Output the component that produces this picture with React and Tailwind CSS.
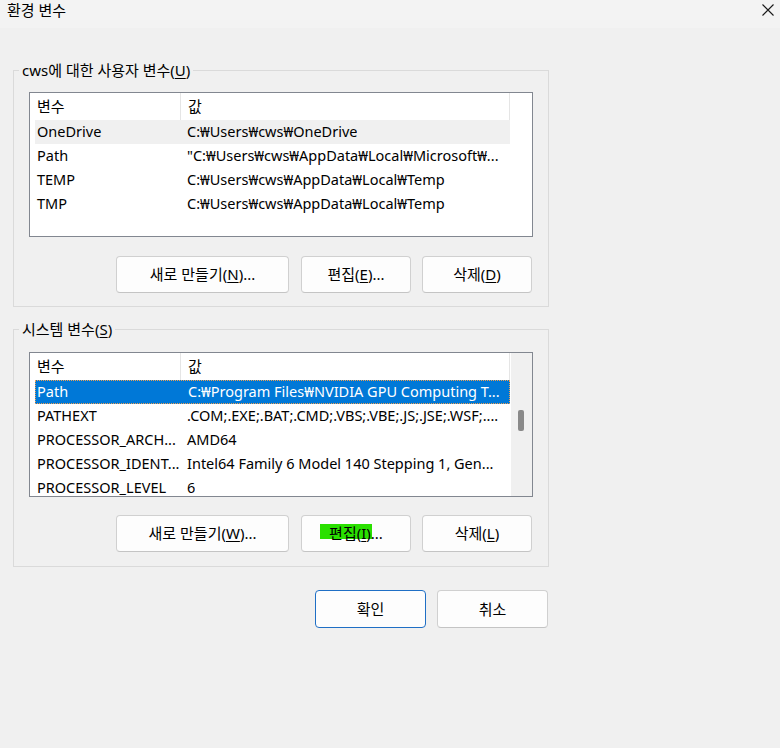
import React from 'react';

const FONT = { fontFamily: "'Segoe UI', 'Noto Sans', 'Noto Sans CJK KR', sans-serif" };

const userRows = [
  ['OneDrive', 'C:₩Users₩cws₩OneDrive'],
  ['Path', '"C:₩Users₩cws₩AppData₩Local₩Microsoft₩...'],
  ['TEMP', 'C:₩Users₩cws₩AppData₩Local₩Temp'],
  ['TMP', 'C:₩Users₩cws₩AppData₩Local₩Temp'],
];

const systemRows = [
  ['Path', 'C:₩Program Files₩NVIDIA GPU Computing T...'],
  ['PATHEXT', '.COM;.EXE;.BAT;.CMD;.VBS;.VBE;.JS;.JSE;.WSF;....'],
  ['PROCESSOR_ARCH...', 'AMD64'],
  ['PROCESSOR_IDENT...', 'Intel64 Family 6 Model 140 Stepping 1, Gen...'],
  ['PROCESSOR_LEVEL', '6'],
];

function Key({ children }) {
  return <span className="underline underline-offset-2">{children}</span>;
}

function Button({ children, className = '', focused = false }) {
  return (
    <button
      type="button"
      className={`relative flex h-[37px] items-center justify-center rounded-[4px] border bg-[#fdfdfd] text-[15px] leading-none text-black ${
        focused ? 'border-[#1f6fc5]' : 'border-[#d0d0d0] border-b-[#c4c4c4]'
      } ${className}`}
    >
      {children}
    </button>
  );
}

function VarList({ rows, hoverIndex = -1, selectedIndex = -1, scrollbar = false }) {
  return (
    <div className="flex h-[145px] w-[504px] overflow-hidden border border-[#828790] bg-white text-[14.5px]">
      <div className="w-[480px] shrink-0">
        {/* header */}
        <div className="flex h-[27px] items-center text-[15px]">
          <div className="flex h-full w-[151px] items-center border-r border-[#e5e5e5] pl-[7px]">변수</div>
          <div className="flex h-full w-[329px] items-center border-r border-[#e5e5e5] pl-[7px]">값</div>
        </div>

        {rows.map(([name, value], i) => {
          const selected = i === selectedIndex;
          const hover = i === hoverIndex;
          return (
            <div
              key={name}
              className={`ml-[5px] flex h-[24px] w-[475px] items-center whitespace-nowrap ${
                selected
                  ? 'border border-dotted border-[#f0a050] bg-[#0078d7] text-white'
                  : hover
                  ? 'bg-[#f0f0f0]'
                  : ''
              }`}
            >
              <div className={`w-[145px] shrink-0 overflow-hidden ${selected ? 'pl-[1px]' : 'pl-[2px]'}`}>{name}</div>
              <div className="overflow-hidden pl-[7px]">{value}</div>
            </div>
          );
        })}
      </div>

      {scrollbar && (
        <div className="ml-[1px] flex w-[21px] flex-col bg-[#f0f0f0] pl-[7px] pt-[57px]">
          <div className="h-[21px] w-[6px] rounded-[2px] bg-[#898989]" />
        </div>
      )}
    </div>
  );
}

function Group({ label, className = '', children }) {
  return (
    <div className={`relative w-[536px] border border-[#dadada] pl-[15px] ${className}`}>
      <span className="absolute -top-[11px] left-[5px] bg-[#f0f0f0] px-[3px] leading-[20px]">{label}</span>
      {children}
    </div>
  );
}

export default function App() {
  return (
    <div className="h-[748px] w-[780px] overflow-hidden bg-[#f0f0f0] text-[15px] text-black" style={FONT}>
      {/* title bar */}
      <div className="flex h-[28px] justify-between bg-[#f3f3f3]">
        <div className="pl-[7px] leading-[20px]">환경 변수</div>
        <div className="pr-[6px] pt-[4px]">
          <svg width="12" height="12" viewBox="0 0 12 12">
            <path d="M0.5 0.5 L11.5 11.5 M11.5 0.5 L0.5 11.5" stroke="#1a1a1a" strokeWidth="1.1" />
          </svg>
        </div>
      </div>

      <div className="pl-[13px]">
        {/* user variables */}
        <Group
          className="mt-[42px] h-[237px] pt-[21px]"
          label={
            <>
              cws에 대한 사용자 변수(<Key>U</Key>)
            </>
          }
        >
          <VarList rows={userRows} hoverIndex={0} />
          <div className="ml-[87px] mt-[19px] flex gap-[12px]">
            <Button className="w-[173px]">
              새로 만들기(<Key>N</Key>)...
            </Button>
            <Button className="w-[110px]">
              편집(<Key>E</Key>)...
            </Button>
            <Button className="-ml-[1px] w-[110px]">
              삭제(<Key>D</Key>)
            </Button>
          </div>
        </Group>

        {/* system variables */}
        <Group
          className="mt-[22px] h-[238px] pt-[22px]"
          label={
            <>
              시스템 변수(<Key>S</Key>)
            </>
          }
        >
          <VarList rows={systemRows} selectedIndex={0} scrollbar />
          <div className="ml-[87px] mt-[18px] flex gap-[12px]">
            <Button className="w-[173px]">
              새로 만들기(<Key>W</Key>)...
            </Button>
            <Button className="w-[110px]">
              <span className="absolute left-[18px] top-[8px] h-[15px] w-[52px] bg-[#2ae000]" />
              <span className="relative">
                편집(<Key>I</Key>)...
              </span>
            </Button>
            <Button className="-ml-[1px] w-[110px]">
              삭제(<Key>L</Key>)
            </Button>
          </div>
        </Group>

        {/* dialog buttons */}
        <div className="mt-[23px] flex w-[536px] justify-end gap-[11px] pr-[1px]">
          <Button focused className="h-[38px] w-[111px]">
            확인
          </Button>
          <Button className="h-[38px] w-[111px]">취소</Button>
        </div>
      </div>
    </div>
  );
}
